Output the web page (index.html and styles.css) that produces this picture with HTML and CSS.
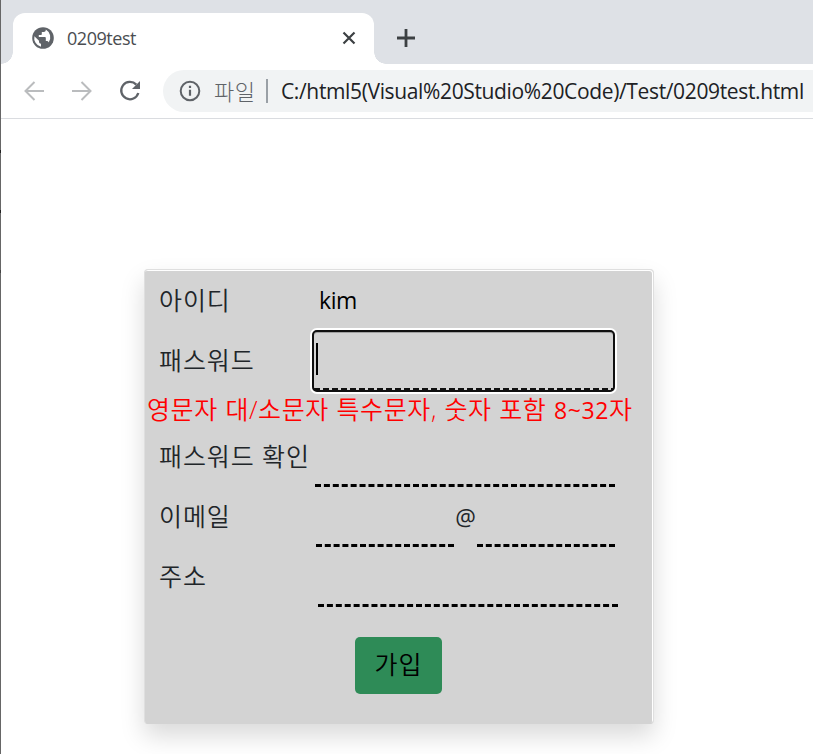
FILE: index.html
```html
<!DOCTYPE html>
<html lang="ko">
<head>
<meta charset="utf-8">
<title>0209test</title>
<link rel="stylesheet" href="styles.css">
</head>
<body>
<div class="window">
  <header class="tabs">
    <div class="corner corner-left"></div>
    <div class="tab">
      <svg class="globe" viewBox="0 0 24 24"><circle cx="12" cy="12" r="10.8" fill="#5f6368"/><path d="M3.400 10.200 8 14.700v1.100c0 1.200.9 2 2 2v3A9 9 0 0 1 3.400 10.200ZM14.800 3.500v.5c0 1.100-.9 2-2 2h-2v2c0 .6-.5 1-1 1h-2v2h6c.6 0 1 .5 1 1v3h1c.9 0 1.600.6 1.900 1.400A9 9 0 0 0 14.800 3.500Z" fill="#fff"/></svg>
      <span class="tab-title">0209test</span>
      <svg class="close" viewBox="0 0 14 14"><path d="M1.500 1.500l11 11M12.500 1.500l-11 11" stroke="#3c4043" stroke-width="2.200"/></svg>
    </div>
    <div class="corner corner-right"></div>
    <svg class="plus" viewBox="0 0 18 18"><path d="M9 0v18M0 9h18" stroke="#3c4043" stroke-width="2.800"/></svg>
  </header>
  <nav class="toolbar">
    <svg class="nav-icon back" viewBox="0 0 20 20"><path d="M20 10H1.500M10.500 1 1.500 10l9 9" fill="none" stroke="#babcbe" stroke-width="2"/></svg>
    <svg class="nav-icon forward" viewBox="0 0 20 20"><path d="M0 10h18.500M9.500 1l9 9-9 9" fill="none" stroke="#babcbe" stroke-width="2"/></svg>
    <svg class="reload" viewBox="0 0 22 22"><path d="M17.300 4.600A8.700 8.700 0 1 0 19.300 13" fill="none" stroke="#5f6368" stroke-width="2.300"/><path d="M21 1v8h-8Z" fill="#5f6368"/></svg>
    <div class="address">
      <svg class="info" viewBox="0 0 22 22"><circle cx="11" cy="11" r="9.300" fill="none" stroke="#5f6368" stroke-width="2"/><path d="M11 9.800v6M11 5.800v2.200" stroke="#5f6368" stroke-width="2.200"/></svg>
      <span class="scheme">파일</span>
      <span class="divider"></span>
      <span class="url">C:/html5(Visual%20Studio%20Code)/Test/0209test.html</span>
    </div>
  </nav>
  <main class="page">
    <form class="card">
      <div class="row"><span class="label">아이디</span><span class="value">kim</span></div>
      <div class="row"><span class="label">패스워드</span><div class="field focused"><span class="caret"></span></div></div>
      <p class="hint">영문자 대/소문자 특수문자, 숫자 포함 <span class="range">8~32</span>자</p>
      <div class="row"><span class="label">패스워드 확인</span><div class="field"></div></div>
      <div class="row"><span class="label">이메일</span><div class="email"><div class="field"></div><span class="at">@</span><div class="field"></div></div></div>
      <div class="row"><span class="label">주소</span><div class="field location"></div></div>
      <button class="submit" type="button">가입</button>
    </form>
  </main>
</div>
</body>
</html>
```
FILE: styles.css
```css
* { box-sizing: border-box; }
body {
  margin: 0;
  background: #fff;
  color: #212529;
  font-family: "Open Sans", "Noto Sans CJK KR", sans-serif;
}
.window {
  width: 813px;
  height: 754px;
  overflow: hidden;
  padding-left: 1px;
  background:
    linear-gradient(#222, #222) 0 150px / 1px 3px no-repeat,
    linear-gradient(#222, #222) 0 210px / 1px 3px no-repeat,
    linear-gradient(#444, #444) 0 270px / 1px 3px no-repeat,
    linear-gradient(#666, #666) 0 0 / 1px 100% no-repeat;
}
.tabs {
  display: flex;
  height: 64px;
  padding-top: 13px;
  background: #dee1e6;
}
.tab {
  display: flex;
  align-items: center;
  width: 361px;
  height: 51px;
  padding: 0 18px 2px;
  border-radius: 12px 12px 0 0;
  background: #fff;
}
.corner { width: 12px; height: 12px; margin-top: 39px; }
.corner-left { background: radial-gradient(circle at 0 0, #dee1e6 11.5px, #fff 12px); }
.corner-right { background: radial-gradient(circle at 100% 0, #dee1e6 11.5px, #fff 12px); }
.globe { width: 24px; height: 24px; }
.tab-title { margin-left: 12px; color: #4a4d51; font-size: 18px; letter-spacing: -0.45px; line-height: 24px; }
.close { width: 14px; height: 14px; margin-left: auto; }
.plus { width: 18px; height: 18px; margin: 16px 0 0 11px; }
.toolbar {
  display: flex;
  align-items: center;
  height: 55px;
  padding-left: 23px;
  border-bottom: 1px solid #dadce0;
}
.nav-icon { flex: none; width: 20px; height: 20px; }
.forward { margin-left: 28px; }
.reload { flex: none; width: 22px; height: 22px; margin-left: 27px; }
.address {
  display: flex;
  align-items: center;
  flex: none;
  width: 680px;
  height: 42px;
  margin-left: 22px;
  padding-left: 16px;
  border-radius: 21px;
  background: #f1f3f4;
}
.info { flex: none; width: 22px; height: 22px; }
.scheme { width: 42px; margin-left: 13px; color: #5f6368; font-size: 22px; font-weight: 300; letter-spacing: 0.5px; line-height: 30px; white-space: nowrap; }
.divider { flex: none; width: 2px; height: 24px; margin-left: 10px; background: #9aa0a6; }
.url { margin-left: 13px; color: #202124; font-size: 21px; letter-spacing: -0.36px; line-height: 30px; white-space: nowrap; }
.page { padding: 150px 0 0 143px; }
.card {
  width: 510px;
  height: 455px;
  padding-top: 1px;
  border: 1px solid #dfdfdf;
  border-bottom-color: #d3d3d3;
  border-radius: 4px;
  background: #d3d3d3;
  box-shadow: inset -1px 1px #fff, 0 12px 24px rgba(0, 0, 0, .15);
}
.row { display: flex; height: 60px; padding-left: 14px; }
.label {
  width: 156px;
  flex: none;
  font-size: 25px;
  font-weight: 350;
  letter-spacing: 0.9px;
  line-height: 58px;
  white-space: nowrap;
}
.value { margin-left: 4px; color: #000; font-size: 23px; letter-spacing: -0.4px; line-height: 59px; }
.field { width: 300px; height: 60px; border-bottom: 3px dashed #000; }
.focused {
  width: 303px;
  height: 62px;
  margin: -1px 0 0 -3px;
  padding: 11px 0 0 2px;
  border: 2px solid #101010;
  border-radius: 5px;
  box-shadow: 0 0 0 2px #fff, inset 0 1px #a0a0a0;
  background: repeating-linear-gradient(90deg, #101010 0 6px, #d3d3d3 6px 9px) left bottom / 100% 2px no-repeat;
}
.caret { display: block; width: 2px; height: 32px; background: #000; }
.hint {
  height: 36px;
  margin: 0;
  padding-left: 2px;
  color: #f00;
  font-size: 25px;
  font-weight: 350;
  letter-spacing: 0.6px;
  word-spacing: 0.5px;
  line-height: 36px;
  white-space: nowrap;
}
.range { font-size: 23px; font-weight: 400; }
.email { display: flex; margin-left: 1px; }
.email .field { width: 138px; }
.at { width: 23px; font-size: 23px; line-height: 60px; text-align: center; }
.location { margin-left: 3px; }
.submit {
  display: block;
  width: 87px;
  height: 57px;
  margin: 30px 0 0 210px;
  padding: 0 0 5px;
  border: 0;
  border-radius: 5px;
  background: #2e8b57;
  color: #000;
  font-family: inherit;
  font-size: 25px;
  font-weight: 350;
  letter-spacing: 1px;
}
```
